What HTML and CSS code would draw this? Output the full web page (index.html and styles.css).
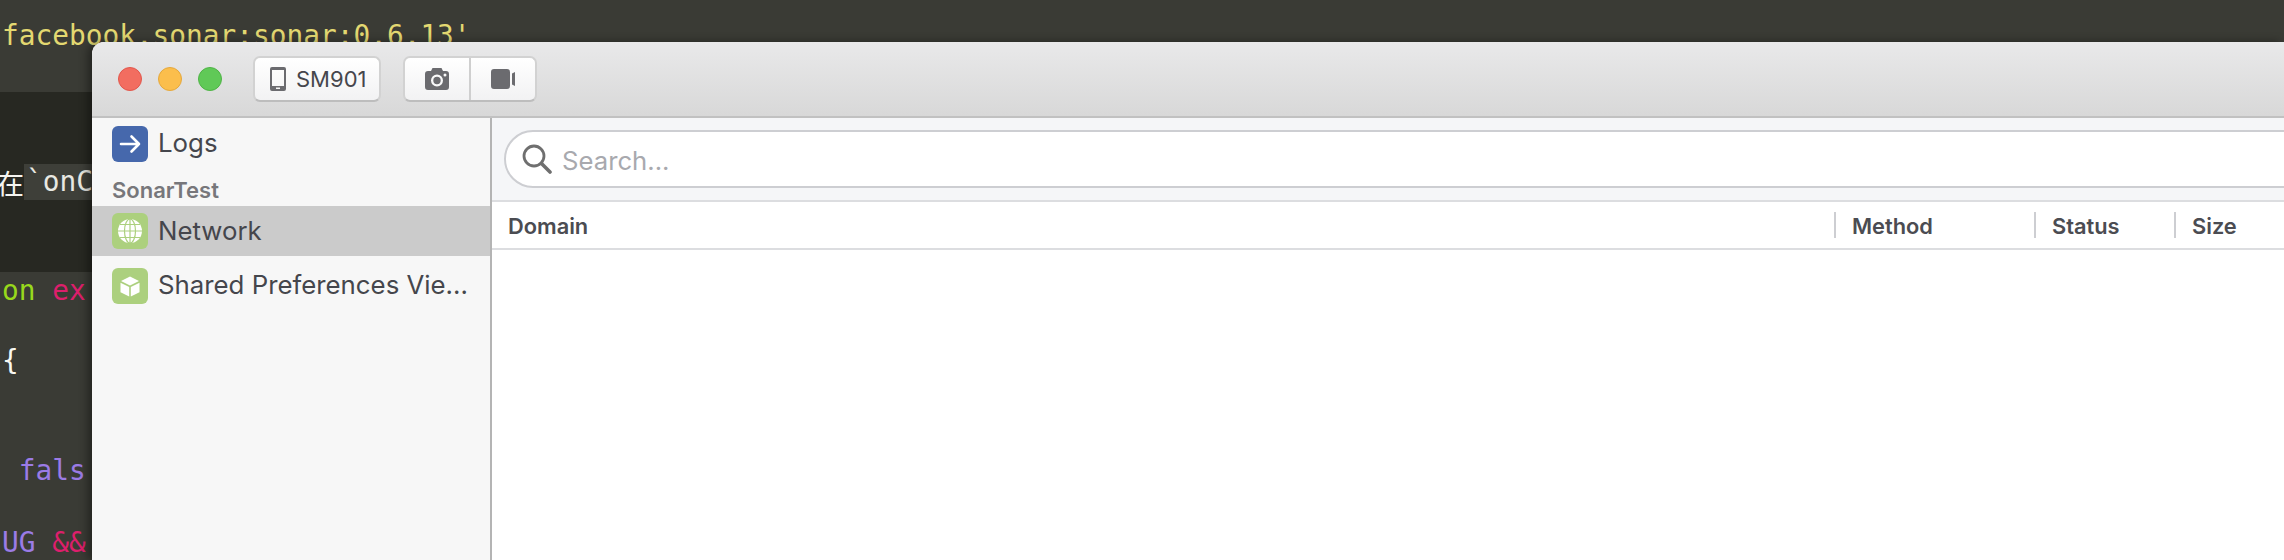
FILE: index.html
```html
<!DOCTYPE html>
<html lang="en">
<head>
<meta charset="utf-8">
<title>Sonar</title>
<link rel="stylesheet" href="styles.css">
</head>
<body>
<div class="editor">
  <section class="band band-top">
    <div class="code code-first"><span class="yellow">facebook.sonar:sonar:0.6.13'</span></div>
  </section>
  <section class="band band-dark">
    <div class="code code-note"><span class="cjk">在</span><span class="tick">`onC</span></div>
  </section>
  <section class="band band-bottom">
    <div class="code code-on"><span class="green">on</span> <span class="pink">ex</span></div>
    <div class="code code-brace"><span class="white">{</span></div>
    <div class="code code-false"> <span class="purple">fals</span></div>
    <div class="code code-debug"><span class="purple">UG</span> <span class="pink">&amp;&amp;</span></div>
  </section>
</div>

<div class="window">
  <header class="titlebar">
    <div class="lights">
      <span class="light light-red"></span>
      <span class="light light-yellow"></span>
      <span class="light light-green"></span>
    </div>
    <button class="btn btn-device">
      <svg class="i-phone" viewBox="0 0 16 24"><path fill="#6b6b6f" fill-rule="evenodd" d="M2 0h12a2 2 0 0 1 2 2v20a2 2 0 0 1-2 2H2a2 2 0 0 1-2-2V2a2 2 0 0 1 2-2zM2 3v16h12V3zM6 20.5v1.6h4v-1.6z"/></svg>
      <span>SM901</span>
    </button>
    <div class="btn-group">
      <button class="btn-seg">
        <svg class="i-camera" viewBox="0 0 24 22"><path fill="#6b6b6f" fill-rule="evenodd" d="M3 3h3l1.5-3h9L18 3h3a3 3 0 0 1 3 3v13a3 3 0 0 1-3 3H3a3 3 0 0 1-3-3V6a3 3 0 0 1 3-3zm9 3.5a6 6 0 1 0 0 12 6 6 0 0 0 0-12zm0 2.3a3.7 3.7 0 1 1 0 7.4 3.7 3.7 0 0 1 0-7.4zM20 5.5a1.5 1.5 0 1 0 0 3 1.5 1.5 0 0 0 0-3z"/></svg>
      </button>
      <button class="btn-seg">
        <svg class="i-video" viewBox="0 0 24 20"><path fill="#6b6b6f" d="M3 0h13a3 3 0 0 1 3 3v14a3 3 0 0 1-3 3H3a3 3 0 0 1-3-3V3a3 3 0 0 1 3-3zM21 4.500l3-1.500v14l-3-1.500z"/></svg>
      </button>
    </div>
  </header>
  <div class="main">
    <aside class="sidebar">
      <div class="item">
        <span class="tile tile-blue">
          <svg viewBox="0 0 36 36"><path fill="none" stroke="#fff" stroke-width="2.600" stroke-linecap="round" stroke-linejoin="round" d="M9 18h18M19.500 10.500 27 18l-7.500 7.500"/></svg>
        </span>
        <span class="item-label">Logs</span>
      </div>
      <div class="section-title">SonarTest</div>
      <div class="item item-active">
        <span class="tile tile-green">
          <svg viewBox="0 0 36 36"><circle cx="18" cy="18" r="12" fill="#fff"/><g fill="none" stroke="#acd07e" stroke-width="1.200"><ellipse cx="18" cy="18" rx="5.500" ry="12"/><path d="M18 6v24M6 18h24M8 11.500h20M8 24.500h20"/></g></svg>
        </span>
        <span class="item-label">Network</span>
      </div>
      <div class="item item-last">
        <span class="tile tile-green">
          <svg viewBox="0 0 36 36"><path fill="#fff" d="M18 8.500 27 13l-9 4.500L9 13zM8.500 14.800l8.700 4.300v9.400l-8.700-4.300zM27.500 14.800v9.400l-8.700 4.300v-9.400z"/></svg>
        </span>
        <span class="item-label">Shared Preferences Vie...</span>
      </div>
    </aside>
    <main class="content">
      <div class="searchbar">
        <div class="search-field">
          <svg class="i-search" viewBox="0 0 30 30"><circle cx="12" cy="12" r="10" fill="none" stroke="#6f6f6f" stroke-width="2.800"/><path d="M19.500 19.500 28 28" stroke="#6f6f6f" stroke-width="3.600" stroke-linecap="round"/></svg>
          <span class="placeholder">Search...</span>
        </div>
      </div>
      <div class="table-head">
        <div class="col col-domain">Domain</div>
        <div class="col col-method">Method</div>
        <div class="col col-status">Status</div>
        <div class="col col-size">Size</div>
      </div>
    </main>
  </div>
</div>
</body>
</html>
```
FILE: styles.css
```css
html, body {
  margin: 0;
  padding: 0;
  width: 2284px;
  height: 560px;
  overflow: hidden;
  background: #3a3b35;
}
.editor {
  width: 2284px;
  height: 560px;
  display: flex;
  flex-direction: column;
  font-family: "DejaVu Sans Mono", "Noto Sans CJK SC", monospace;
  font-size: 27.8px;
  line-height: 36px;
}
.band { overflow: hidden; }
.band-top { height: 92px; background: #3a3b35; }
.band-dark { height: 180px; background: #272822; }
.band-bottom { flex: 1; background: #3a3b35; }
.code { white-space: pre; height: 36px; padding-left: 2px; color: #f8f8f2; }
.code-first { margin-top: 18px; }
.code-note { margin-top: 72px; padding-left: 0; display: flex; }
.code-on { margin-top: 1px; }
.code-brace { margin-top: 34px; }
.code-false { margin-top: 74px; }
.code-debug { margin-top: 36px; }
.cjk { width: 24px; overflow: hidden; direction: rtl; font-family: "Noto Sans CJK SC", sans-serif; color: #f4f4f0; }
.tick { background: #3e3f39; color: #e8e8e2; padding: 0 2px; height: 36px; flex: none; width: 80px; }
.yellow { color: #e3d871; }
.green { color: #98d81c; }
.pink { color: #dd1f6c; }
.purple { color: #9b7be6; }
.white { color: #f8f8f2; }

.window {
  position: absolute;
  left: 92px;
  top: 42px;
  right: 0;
  bottom: 0;
  display: flex;
  flex-direction: column;
  border-top-left-radius: 12px;
  overflow: hidden;
  box-shadow: -4px 0 10px rgba(0, 0, 0, 0.4);
  background: #fff;
  font-family: Inter, "Liberation Sans", sans-serif;
  color: #45464c;
}
.titlebar {
  height: 74px;
  flex: none;
  display: flex;
  align-items: center;
  padding-left: 26px;
  background: linear-gradient(#e9e9ea, #d8d8d8);
  border-bottom: 2px solid #c1c1c1;
}
.lights { display: flex; gap: 16px; margin-right: 31px; }
.light { width: 24px; height: 24px; box-sizing: border-box; border-radius: 50%; border: 1px solid transparent; }
.light-red { background: #f26d60; border-color: #e2574c; }
.light-yellow { background: #fbbe4c; border-color: #e5a83c; }
.light-green { background: #60c957; border-color: #4fb446; }
.btn, .btn-group {
  height: 46px;
  box-sizing: border-box;
  border: 2px solid #d2d2d2;
  border-bottom-color: #bdbdbd;
  border-radius: 7px;
  background: linear-gradient(#fff, #f2f2f3);
  padding: 0;
}
.btn-device {
  width: 128px;
  display: flex;
  align-items: center;
  gap: 10px;
  padding-left: 15px;
  font-family: inherit;
  font-size: 22px;
  color: #45464c;
}
.i-phone { width: 16px; height: 24px; }
.btn-group { width: 134px; margin-left: 22px; display: flex; overflow: hidden; }
.btn-seg {
  border: 0;
  background: transparent;
  padding: 0;
  display: flex;
  align-items: center;
  justify-content: center;
}
.btn-seg:first-child { width: 66px; border-right: 2px solid #cfcfcf; }
.btn-seg:last-child { flex: 1; }
.i-camera { width: 24px; height: 22px; }
.i-video { width: 24px; height: 20px; }

.main { flex: 1; display: flex; min-height: 0; }
.sidebar {
  width: 398px;
  flex: none;
  padding-top: 1px;
  background: #f7f7f7;
  border-right: 2px solid #b4b4b4;
}
.item {
  height: 50px;
  display: flex;
  align-items: center;
  gap: 11px;
  padding-left: 20px;
}
.item-active { background: #cbcbcb; }
.item-last { margin-top: 5px; }
.tile { width: 36px; height: 36px; border-radius: 6px; flex: none; display: block; }
.tile svg { display: block; width: 36px; height: 36px; }
.tile-blue { background: #4668ac; }
.tile-green { background: #acd07e; }
.item-label {
  font-size: 25.800px;
  line-height: 30px;
  margin: -2px 0 0 -1px;
  color: #45464c;
  white-space: nowrap;
}
.item-active .item-label { margin-top: 0; }
.section-title {
  height: 37px;
  box-sizing: border-box;
  padding: 7px 0 0 20px;
  font-size: 22px;
  line-height: 28px;
  font-weight: 600;
  color: #77777b;
}

.content { flex: 1; min-width: 0; display: flex; flex-direction: column; }
.searchbar {
  height: 84px;
  box-sizing: border-box;
  padding: 12px 0 0 12px;
  background: #f5f6f8;
  border-bottom: 2px solid #dcdde0;
  overflow: hidden;
  flex: none;
}
.search-field {
  height: 58px;
  box-sizing: border-box;
  margin-right: -40px;
  display: flex;
  align-items: center;
  gap: 11px;
  padding-left: 16px;
  background: #fff;
  border: 2px solid #cdced2;
  border-radius: 29px;
}
.i-search { width: 30px; height: 30px; flex: none; }
.placeholder { font-size: 25.700px; line-height: 30px; margin: 3px 0 0 -1px; color: #a8a9ae; }
.table-head {
  height: 46px;
  flex: none;
  display: flex;
  align-items: center;
  border-bottom: 2px solid #dcdde0;
  font-size: 21.800px;
  font-weight: 600;
  color: #4b4c52;
}
.col { height: 26px; line-height: 28px; box-sizing: border-box; padding-left: 16px; }
.col-domain { width: 1342px; }
.col-method { width: 200px; border-left: 2px solid #cdced2; }
.col-status { width: 140px; border-left: 2px solid #cdced2; }
.col-size { flex: 1; border-left: 2px solid #cdced2; }
```
